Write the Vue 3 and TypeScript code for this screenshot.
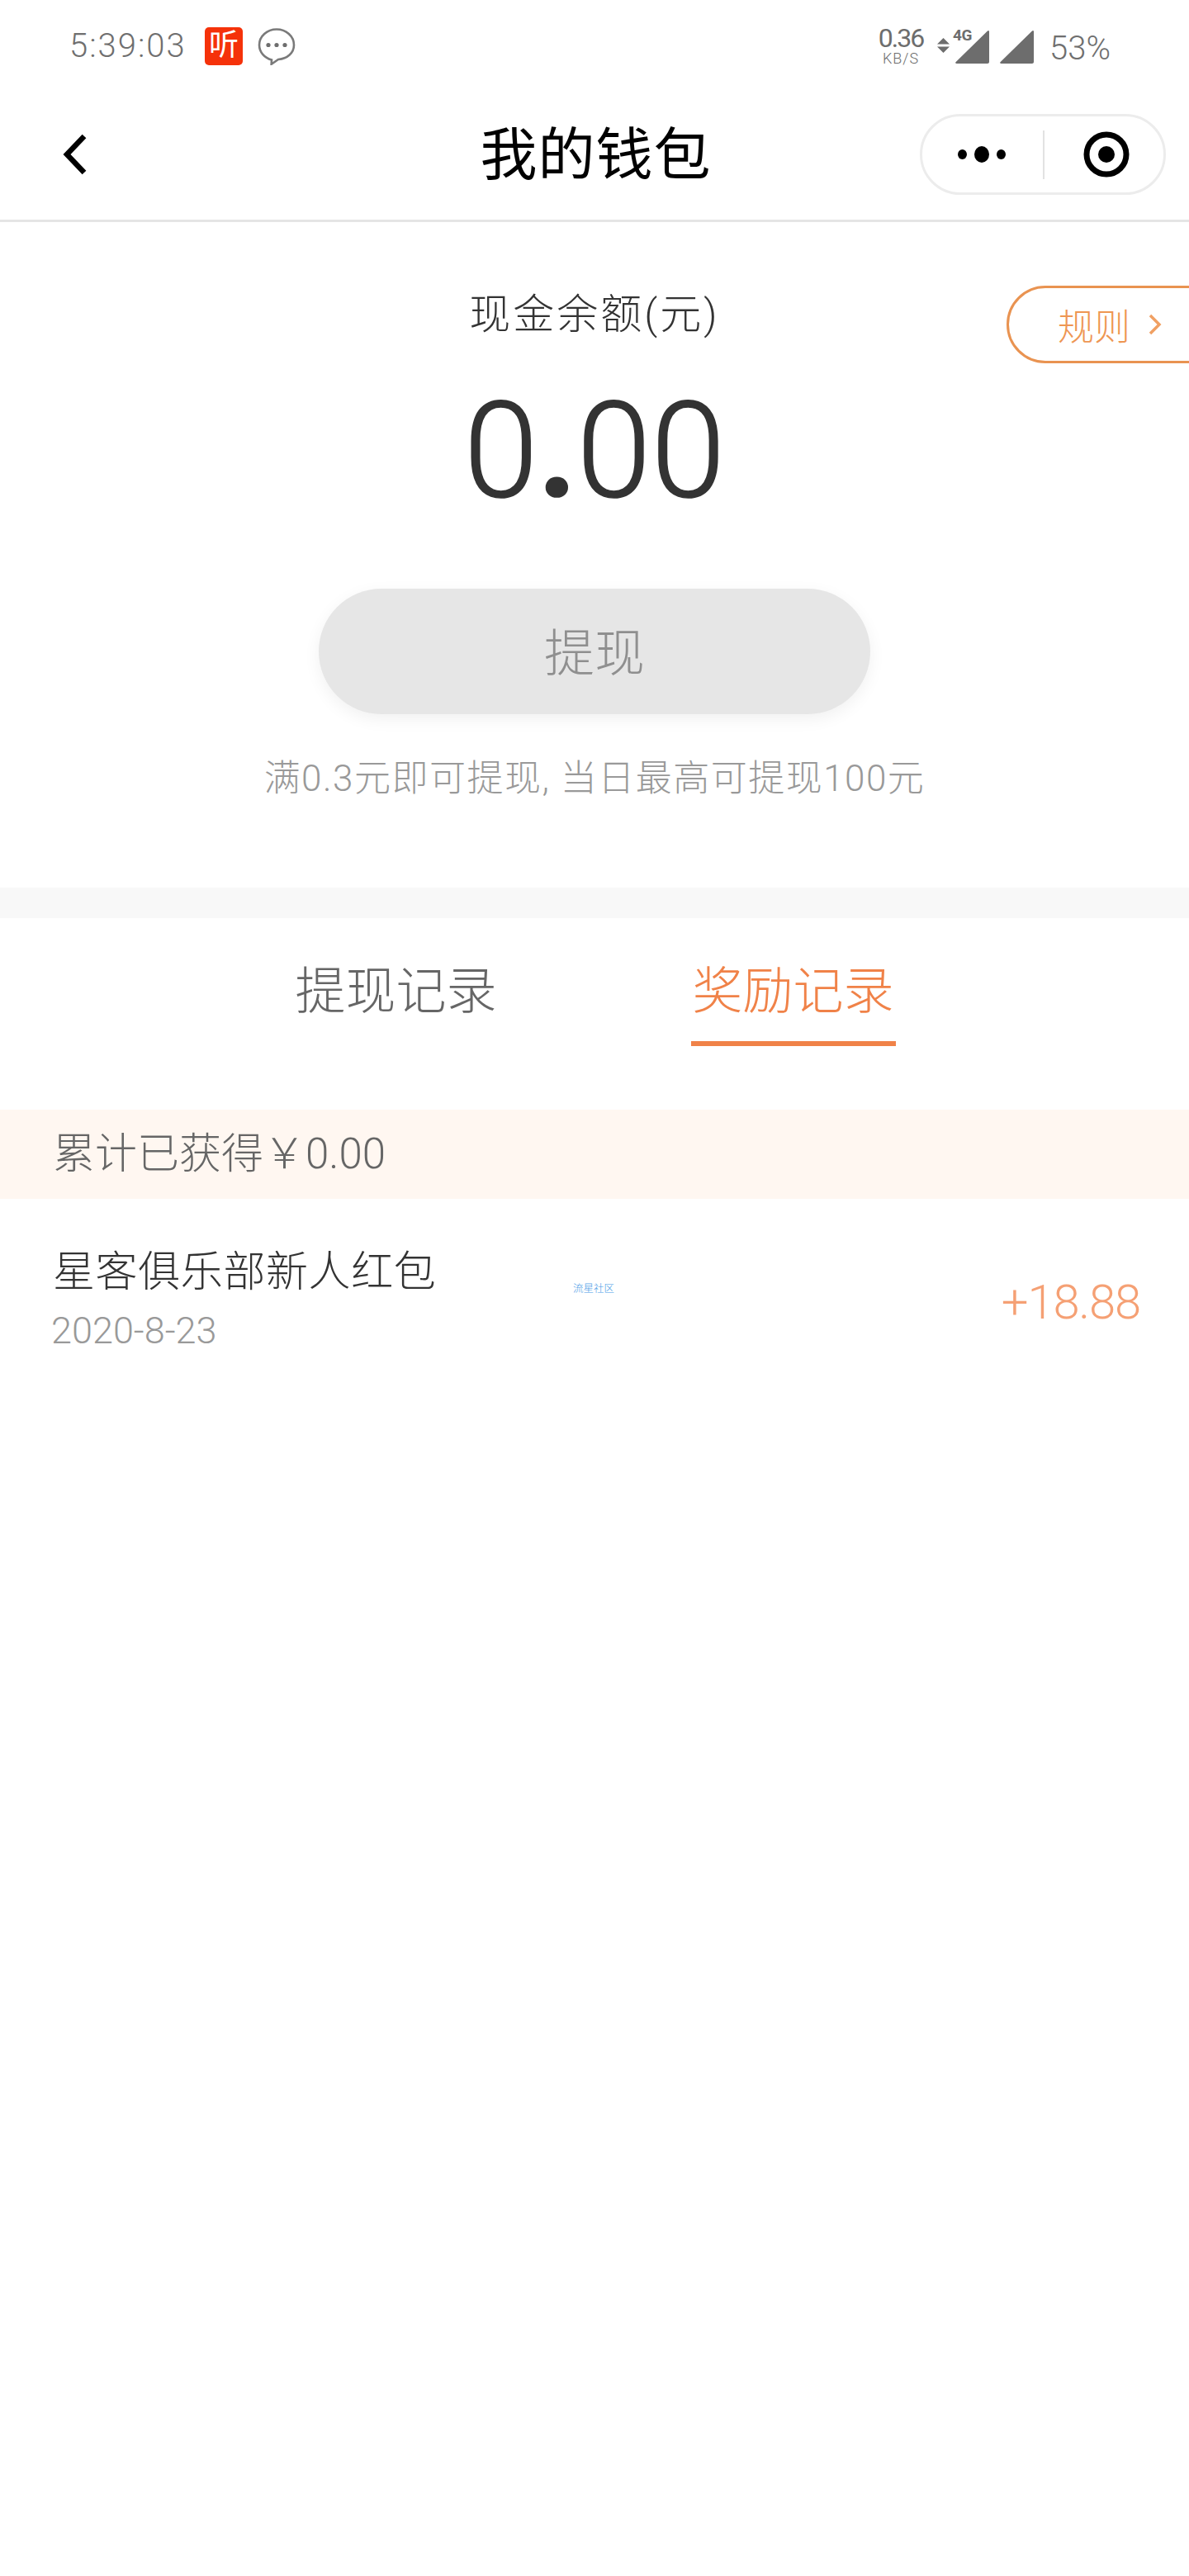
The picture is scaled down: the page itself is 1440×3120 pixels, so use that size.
<script setup lang="ts">
const tabs = [
  { label: '提现记录', active: false },
  { label: '奖励记录', active: true },
]
</script>

<template>
  <div class="page">
    <div class="status-bar">
      <div class="status-left">
        <span class="time">5:39:03</span>
        <span class="app-badge">听</span>
        <svg class="chat-icon" viewBox="0 0 46 46" width="46" height="46">
          <path d="M23 2.500C11.500 2.500 2 11 2 21.500c0 8.600 6.300 15.700 15 18l-.3 5.200 8.300-5.700C36 38.300 44 31 44 21.500 44 11 34.500 2.500 23 2.500z" fill="none" stroke="#7a7a7a" stroke-width="2.600" />
          <circle cx="13" cy="21.500" r="2.600" fill="#6e6e6e" />
          <circle cx="23" cy="21.500" r="2.600" fill="#6e6e6e" />
          <circle cx="33" cy="21.500" r="2.600" fill="#6e6e6e" />
        </svg>
      </div>
      <div class="status-right">
        <div class="net-speed">
          <span class="net-value">0.36</span>
          <span class="net-unit">KB/S</span>
        </div>
        <svg class="net-arrows" viewBox="0 0 15 18" width="15" height="18">
          <path d="M7.500 0L15 7.500H0z M0 10.500H15L7.500 18z" fill="#6d6d6d" />
        </svg>
        <div class="signal">
          <span class="signal-tag">4G</span>
          <svg viewBox="0 0 41 41" width="41" height="41">
            <path d="M39 1.500c1 -1 2 -.5 2 1V39c0 1 -1 2 -2 2H1.500c-1.500 0 -1.800 -1 -.8 -2z" fill="#6d6d6d" />
          </svg>
        </div>
        <svg class="signal-two" viewBox="0 0 41 41" width="41" height="41">
          <path d="M39 1.500c1 -1 2 -.5 2 1V39c0 1 -1 2 -2 2H1.500c-1.500 0 -1.800 -1 -.8 -2z" fill="#6d6d6d" />
        </svg>
        <span class="battery">53%</span>
      </div>
    </div>

    <div class="nav-bar">
      <div class="nav-left">
        <svg viewBox="0 0 31 50" width="31" height="50">
          <path d="M27 3L6 25l21 22" fill="none" stroke="#000" stroke-width="6.500" />
        </svg>
      </div>
      <h1 class="nav-title">我的钱包</h1>
      <div class="nav-right">
        <div class="capsule">
          <div class="capsule-dots">
            <i class="dot small" />
            <i class="dot big" />
            <i class="dot small" />
          </div>
          <div class="capsule-line" />
          <svg viewBox="0 0 56 56" width="56" height="56">
            <circle cx="28" cy="28" r="24" fill="none" stroke="#000" stroke-width="7" />
            <circle cx="28" cy="28" r="10" fill="#000" />
          </svg>
        </div>
      </div>
    </div>

    <section class="balance">
      <div class="rule-btn">
        <span>规则</span>
        <svg viewBox="0 0 16 26" width="16" height="26">
          <path d="M2 2l11 11L2 24" fill="none" stroke="#f0a063" stroke-width="3.500" />
        </svg>
      </div>
      <p class="balance-label">现金余额(元)</p>
      <p class="balance-amount">0<span class="amount-dot">.</span>00</p>
      <button class="withdraw-btn" type="button"><span>提现</span></button>
      <p class="balance-hint">满0.3元即可提现, 当日最高可提现100元</p>
    </section>

    <div class="band" />

    <div class="tabs">
      <div v-for="tab in tabs" :key="tab.label" class="tab" :class="{ active: tab.active }">
        {{ tab.label }}
      </div>
    </div>

    <div class="sum-bar">累计已获得￥0.00</div>

    <div class="record">
      <div class="record-info">
        <p class="record-title">星客俱乐部新人红包</p>
        <p class="record-date">2020-8-23</p>
      </div>
      <span class="record-amount">+18.88</span>
      <span class="watermark">流星社区</span>
    </div>
  </div>
</template>

<style>
html,
body {
  margin: 0;
  background: #fff;
}
</style>

<style scoped>
.page {
  width: 1440px;
  min-height: 3120px;
  background: #fff;
  font-family: Roboto, "Noto Sans CJK SC", sans-serif;
  font-weight: 300;
  color: #333;
}

p,
h1 {
  margin: 0;
}

.status-bar {
  height: 108px;
  display: flex;
  justify-content: space-between;
  align-items: flex-start;
  padding: 33px 95px 0 84px;
  box-sizing: border-box;
}

.status-left,
.status-right {
  display: flex;
  align-items: flex-start;
}

.time {
  font-size: 40px;
  line-height: 46px;
  letter-spacing: 2px;
  color: #6f6f6f;
  width: 164px;
}

.app-badge {
  width: 46px;
  height: 46px;
  border-radius: 5px;
  background: #f5320a;
  color: #fff;
  font-size: 36px;
  line-height: 44px;
  text-align: center;
  font-weight: 400;
  margin-right: 18px;
}

.net-speed {
  width: 56px;
  display: flex;
  flex-direction: column;
  align-items: center;
  color: #6d6d6d;
}

.net-value {
  font-size: 32px;
  line-height: 26px;
  letter-spacing: -2px;
  font-weight: 400;
}

.net-unit {
  font-size: 18px;
  line-height: 20px;
  margin-top: 2px;
  letter-spacing: 1px;
}

.net-arrows {
  margin: 13px 0 0 16px;
}

.signal {
  position: relative;
  margin: 3px 0 0 7px;
}

.signal-tag {
  position: absolute;
  top: -2px;
  left: -3px;
  font-size: 19px;
  line-height: 18px;
  font-weight: 700;
  color: #6d6d6d;
  letter-spacing: -0.5px;
}

.signal-two {
  margin: 3px 0 0 13px;
}

.battery {
  font-size: 40px;
  line-height: 46px;
  color: #6f6f6f;
  margin: 3px 0 0 19px;
}

.nav-bar {
  height: 161px;
  border-bottom: 3px solid #e5e5e5;
  box-sizing: border-box;
  display: grid;
  grid-template-columns: 1fr auto 1fr;
  align-items: center;
}

.nav-left {
  padding-left: 75px;
  display: flex;
}

.nav-title {
  font-size: 69px;
  line-height: 84px;
  padding: 4px 0 0 3px;
  font-weight: 400;
  color: #000;
  letter-spacing: 1px;
}

.nav-right {
  display: flex;
  justify-content: flex-end;
  padding-right: 28px;
}

.capsule {
  width: 298px;
  height: 98px;
  border: 3px solid #ececec;
  border-radius: 49px;
  box-sizing: border-box;
  display: flex;
  align-items: center;
  padding-left: 43px;
}

.capsule-dots {
  width: 58px;
  display: flex;
  align-items: center;
  justify-content: space-between;
}

.dot {
  display: block;
  background: #000;
  border-radius: 50%;
}

.dot.small {
  width: 11px;
  height: 12px;
}

.dot.big {
  width: 18px;
  height: 20px;
}

.capsule-line {
  width: 2px;
  height: 59px;
  background: #e2e2e2;
  margin: 0 47px 0 45px;
}

.balance {
  position: relative;
  padding: 82px 0 102px;
  display: flex;
  flex-direction: column;
  align-items: center;
}

.rule-btn {
  position: absolute;
  top: 77px;
  right: -3px;
  width: 224px;
  height: 94px;
  box-sizing: border-box;
  border: 3px solid #e99351;
  border-radius: 47px 0 0 47px;
  display: flex;
  align-items: center;
  padding-left: 59px;
  gap: 22px;
  font-size: 44px;
  color: #ee9653;
}

.balance-label {
  font-size: 50px;
  line-height: 60px;
  letter-spacing: 3px;
  color: #333;
}

.balance-amount {
  margin-top: 50px;
  font-size: 162px;
  line-height: 170px;
  color: #333;
  -webkit-text-stroke: 1.5px #333;
}

.amount-dot {
  font-weight: 700;
}

.withdraw-btn {
  margin-top: 82px;
  width: 668px;
  height: 152px;
  padding: 0 0 6px;
  border: none;
  border-radius: 76px;
  background: #e6e6e6;
  box-shadow: 0 6px 20px rgba(0, 0, 0, 0.06);
  color: #8f8f8f;
  font-family: inherit;
  font-weight: 300;
  font-size: 61px;
}

.balance-hint {
  margin-top: 48px;
  font-size: 44px;
  line-height: 60px;
  letter-spacing: 1.5px;
  color: #999;
}

.band {
  height: 37px;
  background: #f8f8f8;
}

.tabs {
  height: 232px;
  box-sizing: border-box;
  padding-top: 53px;
  display: flex;
  justify-content: center;
  align-items: flex-start;
  gap: 233px;
}

.tab {
  font-size: 61px;
  line-height: 72px;
  padding: 0 2px 24px;
  border-bottom: 6px solid transparent;
  color: #666;
}

.tab.active {
  color: #f08248;
  border-bottom-color: #f08248;
}

.sum-bar {
  height: 108px;
  background: #fff7f1;
  padding-left: 64px;
  font-size: 51px;
  line-height: 108px;
  color: #666;
}

.record {
  position: relative;
  display: flex;
  justify-content: space-between;
  align-items: center;
  padding: 59px 59px 0 62px;
}

.record-title {
  font-size: 51px;
  line-height: 60px;
  letter-spacing: 0.6px;
  color: #333;
  padding-left: 2px;
}

.record-date {
  margin-top: 16px;
  font-size: 45px;
  line-height: 50px;
  color: #999;
}

.record-amount {
  font-size: 58px;
  line-height: 70px;
  letter-spacing: -1.2px;
  padding-top: 6px;
  color: #f5a074;
}

.watermark {
  position: absolute;
  left: 694px;
  top: 101px;
  font-size: 12.5px;
  line-height: 16px;
  color: #4b9be6;
}
</style>
